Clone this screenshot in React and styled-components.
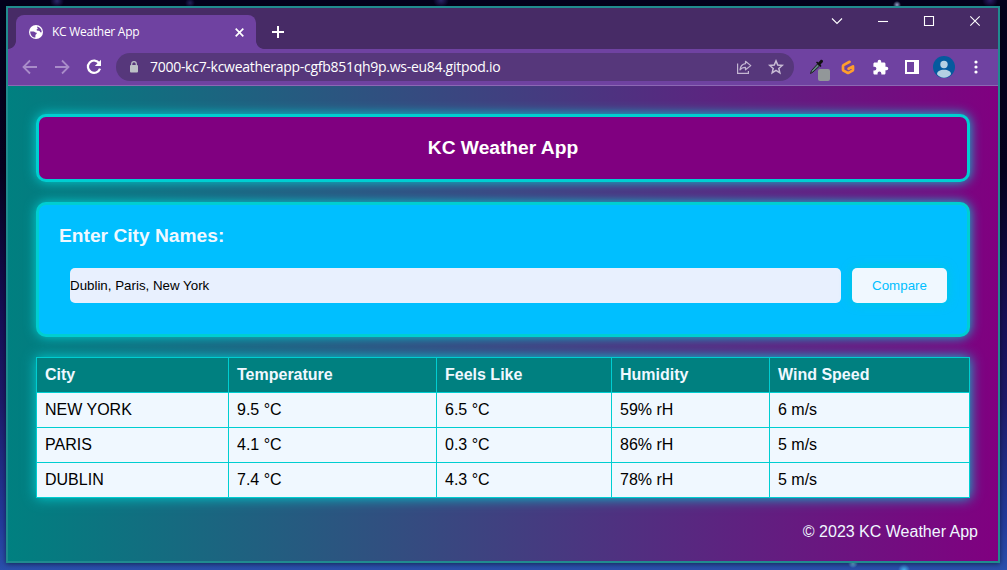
import React from "react";
import styled, { createGlobalStyle } from "styled-components";

const GlobalStyle = createGlobalStyle`
  *, *::before, *::after { box-sizing: border-box; }
  body { margin: 0; overflow: hidden; font-family: "Liberation Sans", Arial, sans-serif; }
`;

const Desktop = styled.div`
  width: 1007px;
  height: 570px;
  padding: 6px 7px 7px 6px;
  background:
    radial-gradient(circle 5px at 190px 3px, #24205a 0%, transparent 100%),
    radial-gradient(circle 7px at 57px 1px, #2c2468 0%, transparent 100%),
    radial-gradient(circle 8px at 441px 0, #2c2468 0%, transparent 100%),
    radial-gradient(circle 4px at 897px 5px, #a9b6e4 0%, transparent 100%),
    radial-gradient(circle 8px at 990px 0, #2d1d66 0%, transparent 100%),
    radial-gradient(circle 5px at 853px 563px, #76c8f0 0%, transparent 100%),
    radial-gradient(circle 6px at 904px 570px, #48b4ee 0%, transparent 100%),
    linear-gradient(180deg, #04001c 0%, #06021f 30%, #160f55 55%, #1d1a68 70%, #233c9c 92%, #2a50ac 100%);
`;

const Window = styled.div`
  display: flex;
  flex-direction: column;
  height: 557px;
  border: 2px solid #208b8f;
  background: #6f42a1;
  box-shadow: 0 1px 5px rgba(0, 0, 0, 0.5);
`;

const TitleBar = styled.div`
  display: flex;
  align-items: flex-end;
  flex: 0 0 41px;
  padding-left: 8px;
  background: #472b66;
  color: #fff;
`;

const Tab = styled.div`
  position: relative;
  display: flex;
  align-items: center;
  width: 240px;
  height: 34px;
  padding: 0 12px 0 13px;
  border-radius: 8px 8px 0 0;
  background: #6f42a1;

  &::before,
  &::after {
    content: "";
    position: absolute;
    bottom: 0;
    width: 8px;
    height: 8px;
  }
  &::before {
    left: -8px;
    background: radial-gradient(circle at 0 0, transparent 7.5px, #6f42a1 8.2px);
  }
  &::after {
    right: -8px;
    background: radial-gradient(circle at 100% 0, transparent 7.5px, #6f42a1 8.2px);
  }
`;

const TabTitle = styled.span`
  flex: 1;
  margin-left: 9px;
  font: 12px/16px "Open Sans", "Noto Sans", sans-serif;
  letter-spacing: -0.28px;
  white-space: nowrap;
`;

const Icon = styled.svg`
  display: block;
  flex: none;
  overflow: visible;
`;

const NewTab = styled.div`
  display: flex;
  align-items: center;
  height: 34px;
  margin-left: 15px;
`;

const WindowControls = styled.div`
  display: flex;
  align-self: flex-start;
  margin-left: auto;
`;

const Control = styled.div`
  display: grid;
  place-items: center;
  width: 46px;
  height: 26px;
`;

const Toolbar = styled.div`
  display: flex;
  align-items: center;
  flex: 0 0 37px;
  padding-left: 14px;
  border-bottom: 1px solid #8c68b4;
  color: #fff;
`;

const NavButtons = styled.div`
  display: flex;
  gap: 16px;
  margin-right: 14px;
`;

const AddressBar = styled.div`
  display: flex;
  align-items: center;
  width: 678px;
  height: 28px;
  padding: 0 10px 0 13px;
  border-radius: 14px;
  background: #56377b;
`;

const Url = styled.span`
  flex: 1;
  margin-left: 11px;
  font: 14px/20px "Open Sans", "Noto Sans", sans-serif;
  letter-spacing: -0.28px;
  white-space: nowrap;
`;

const AddressActions = styled.div`
  display: flex;
  gap: 16px;
`;

const Extensions = styled.div`
  display: flex;
  align-items: center;
  margin-left: 15px;
`;

const ExtensionButton = styled.div`
  display: grid;
  place-items: center;
  width: ${({ $wide }) => ($wide ? "23px" : "32px")};
  height: 28px;
  justify-items: ${({ $wide }) => ($wide ? "start" : "center")};
`;

const Page = styled.main`
  flex: 1;
  display: flex;
  flex-direction: column;
  gap: 20px;
  padding: 28px 28px 0;
  background: linear-gradient(to right, teal, purple);
`;

const Card = styled.section`
  border: 3px solid darkturquoise;
  border-radius: 10px;
  box-shadow: 0 0 12px darkturquoise;
`;

const Banner = styled(Card)`
  display: flex;
  justify-content: center;
  height: 68px;
  padding-top: 19px;
  background: purple;
  color: #fff;
`;

const Title = styled.h1`
  margin: 0;
  font-size: 19.2px;
  line-height: 23px;
`;

const SearchCard = styled(Card)`
  height: 135px;
  padding: 19px 20px 0;
  background: deepskyblue;
  color: aliceblue;
`;

const Heading = styled.h2`
  margin: 0;
  font-size: 19.2px;
  line-height: 23px;
`;

const SearchRow = styled.form`
  display: flex;
  gap: 11px;
  margin: 21px 0 0 11px;
`;

const CityInput = styled.input`
  width: 771px;
  height: 35px;
  padding: 0;
  border: 0;
  border-radius: 5px;
  background: #e8f0fe;
  color: #000;
  font: 13.333px "Liberation Sans", Arial, sans-serif;
`;

const CompareButton = styled.button`
  width: 95px;
  height: 35px;
  padding: 0;
  border: 0;
  border-radius: 5px;
  background: aliceblue;
  color: deepskyblue;
  font: 13.333px "Liberation Sans", Arial, sans-serif;
  box-shadow: 0 0 12px rgba(0, 206, 209, 0.75);
`;

const Table = styled.table`
  width: 934px;
  table-layout: fixed;
  border-collapse: collapse;
  background: aliceblue;
  box-shadow: 0 0 12px darkturquoise;
`;

const Cell = styled.td`
  height: 35px;
  padding: 0 8px;
  border: 1px solid darkturquoise;
  color: #000;
  font-size: 16px;
  line-height: 18px;
  text-align: left;
`;

const HeaderCell = styled(Cell)`
  background: teal;
  color: aliceblue;
  font-weight: bold;
`;

const Footer = styled.footer`
  margin: 5px -8px 0 0;
  color: aliceblue;
  font-size: 16px;
  line-height: 18px;
  text-align: right;
`;

const columns = [
  ["City", 192],
  ["Temperature", 208],
  ["Feels Like", 175],
  ["Humidity", 158],
  ["Wind Speed", 200],
];

const rows = [
  ["NEW YORK", "9.5 °C", "6.5 °C", "59% rH", "6 m/s"],
  ["PARIS", "4.1 °C", "0.3 °C", "86% rH", "5 m/s"],
  ["DUBLIN", "7.4 °C", "4.3 °C", "78% rH", "5 m/s"],
];

const Globe = () => (
  <Icon width="14" height="14" viewBox="0 0 14 14">
    <circle cx="7" cy="7" r="7" fill="#fff" />
    <path d="M1.2 6.4h3.3c1.3 0 1.4 1.1 2.4 1.2 1 .1 1.2.8.5 1.4-.8.6-1 .9-1 1.6v1.9c-2.9 0-5.2-2.3-5.2-6.1zM8.2 1.5c2.6.5 4.5 2.8 4.5 5.6-.7.9-1.3.2-1.8-.7-.4-.7-2-.2-2.9-.9-.8-.7-.2-1.5.4-1.5.7-.1.3-.9-.2-1.2z" fill="#6f42a1" />
  </Icon>
);

const Close = () => (
  <Icon width="9" height="9" viewBox="0 0 9 9" stroke="#fff" strokeWidth="1.7">
    <path d="M.7.7l7.600 7.600M8.300.7L.7 8.300" />
  </Icon>
);

const Arrow = ({ forward }) => (
  <Icon width="16" height="16" viewBox="0 0 16 16" fill="none" stroke="#a98cc9" strokeWidth="1.8">
    <path d={forward ? "M1 8h13M8 1.500L14.500 8 8 14.500" : "M15 8H2M8 1.500L1.500 8 8 14.500"} />
  </Icon>
);

const Reload = () => (
  <Icon width="16" height="16" viewBox="0 0 16 16">
    <path d="M13.300 4.300A6.200 6.200 0 1 0 14 9.700" fill="none" stroke="#fff" strokeWidth="2.200" />
    <path d="M15 .8V7H8.800z" fill="#fff" />
  </Icon>
);

const Lock = () => (
  <Icon width="10" height="12" viewBox="0 0 10 12">
    <rect x="1" y="4" width="8" height="7.500" rx="1" fill="#bdc1c6" />
    <path d="M2.700 4.500V3a2.300 2.300 0 0 1 4.600 0v1.500" fill="none" stroke="#bdc1c6" strokeWidth="1.200" />
  </Icon>
);

const Share = () => (
  <Icon width="16" height="16" viewBox="0 0 16 16" fill="none" stroke="#c3b6d2" strokeWidth="1.200">
    <path d="M1.600 4.500v9.900h10.800v-2.500" />
    <path d="M9.500 2.300l5.300 4.300-5.300 4.200V8.400c-2.600 0-4.300.8-5.500 2.500.4-3.300 2.300-5.700 5.500-6.200z" strokeLinejoin="round" />
  </Icon>
);

const Star = () => (
  <Icon width="16" height="16" viewBox="0 0 16 16" fill="none" stroke="#c8bcd5" strokeWidth="1.500">
    <path d="M8 1.900l1.750 4.150 4.450.4-3.400 2.950 1.050 4.400L8 11.450 4.150 13.800l1.050-4.400-3.400-2.950 4.450-.4z" />
  </Icon>
);

const Dropper = () => (
  <Icon width="21" height="28" viewBox="0 -6 21 28">
    <path d="M1.500 14.500l1-3 6-6.500 2 2-6.500 6z" fill="#5d8480" stroke="#202020" strokeWidth="1" />
    <path d="M7 3.500l1-1 1.400 1 2-2.300c1.300-1.300 3.500.5 2.300 2L11.500 5.500l1 1.500-1 1z" fill="#101010" />
    <rect x="9" y="10" width="12" height="12" rx="2" fill="#929799" />
  </Icon>
);

const Gitpod = () => (
  <Icon width="14" height="15" viewBox="0 0 14 15" fill="none">
    <path d="M8.600 1.800L2.500 5.100a1 1 0 0 0-.5.9v3.700a1 1 0 0 0 .5.9l4 2.200a1 1 0 0 0 1 0l4-2.200a1 1 0 0 0 .5-.9V6.400L7.600 8.800" stroke="#ff9e2c" strokeWidth="2.700" strokeLinecap="round" strokeLinejoin="round" />
  </Icon>
);

const Puzzle = () => (
  <Icon width="17" height="17" viewBox="0 0 24 24" fill="#fff">
    <path d="M20.500 11H19V7c0-1.100-.9-2-2-2h-4V3.500a2.500 2.500 0 0 0-5 0V5H4c-1.100 0-2 .9-2 2v3.800h1.500a2.700 2.700 0 0 1 0 5.400H2V20c0 1.100.9 2 2 2h3.800v-1.500a2.700 2.700 0 0 1 5.400 0V22H17c1.100 0 2-.9 2-2v-4h1.500a2.500 2.500 0 0 0 0-5z" />
  </Icon>
);

const SidePanel = () => (
  <Icon width="14" height="14" viewBox="0 0 14 14">
    <path fillRule="evenodd" d="M0 0h14v14H0zM2 2v10h7V2z" fill="#fff" />
  </Icon>
);

const Avatar = () => (
  <Icon width="22" height="22" viewBox="0 0 22 22">
    <circle cx="11" cy="11" r="11" fill="#055a9e" />
    <circle cx="11" cy="8.500" r="3.700" fill="#b5d0e3" />
    <path d="M4 18.300c0-3 3-4.600 7-4.600s7 1.600 7 4.600c-1.800 2.200-4.200 3.500-7 3.500s-5.200-1.300-7-3.500z" fill="#b5d0e3" />
  </Icon>
);

const Menu = () => (
  <Icon width="4" height="14" viewBox="0 0 4 14" fill="#fff">
    <circle cx="2" cy="2" r="1.600" />
    <circle cx="2" cy="7" r="1.600" />
    <circle cx="2" cy="12" r="1.600" />
  </Icon>
);

const extensionIcons = [Gitpod, Puzzle, SidePanel, Avatar, Menu];

const controlPaths = [
  "M0 2.500l5 5 5-5",
  "M0 5.500h10",
  "M.5.5h9v9h-9z",
  "M.3.3l9.400 9.400M9.700.3l-9.400 9.400",
];

export default function App() {
  return (
    <Desktop>
      <GlobalStyle />
      <Window>
        <TitleBar>
          <Tab>
            <Globe />
            <TabTitle>KC Weather App</TabTitle>
            <Close />
          </Tab>
          <NewTab>
            <Icon width="14" height="14" viewBox="0 0 14 14" stroke="#fff" strokeWidth="2">
              <path d="M7 1v12M1 7h12" />
            </Icon>
          </NewTab>
          <WindowControls>
            {controlPaths.map((d) => (
              <Control key={d}>
                <Icon width="10" height="10" viewBox="0 0 10 10" fill="none" stroke="#fff" strokeWidth="1.1">
                  <path d={d} />
                </Icon>
              </Control>
            ))}
          </WindowControls>
        </TitleBar>
        <Toolbar>
          <NavButtons>
            <Arrow />
            <Arrow forward />
            <Reload />
          </NavButtons>
          <AddressBar>
            <Lock />
            <Url>7000-kc7-kcweatherapp-cgfb851qh9p.ws-eu84.gitpod.io</Url>
            <AddressActions>
              <Share />
              <Star />
            </AddressActions>
          </AddressBar>
          <Extensions>
            <ExtensionButton $wide>
              <Dropper />
            </ExtensionButton>
            {extensionIcons.map((Glyph, i) => (
              <ExtensionButton key={i}>
                <Glyph />
              </ExtensionButton>
            ))}
          </Extensions>
        </Toolbar>
        <Page>
          <Banner>
            <Title>KC Weather App</Title>
          </Banner>
          <SearchCard>
            <Heading>Enter City Names:</Heading>
            <SearchRow>
              <CityInput defaultValue="Dublin, Paris, New York" />
              <CompareButton type="button">Compare</CompareButton>
            </SearchRow>
          </SearchCard>
          <Table>
            <colgroup>
              {columns.map(([name, width]) => (
                <col key={name} width={width} />
              ))}
            </colgroup>
            <thead>
              <tr>
                {columns.map(([name]) => (
                  <HeaderCell as="th" key={name}>{name}</HeaderCell>
                ))}
              </tr>
            </thead>
            <tbody>
              {rows.map((row) => (
                <tr key={row[0]}>
                  {row.map((value, i) => (
                    <Cell key={i}>{value}</Cell>
                  ))}
                </tr>
              ))}
            </tbody>
          </Table>
          <Footer>© 2023 KC Weather App</Footer>
        </Page>
      </Window>
    </Desktop>
  );
}
